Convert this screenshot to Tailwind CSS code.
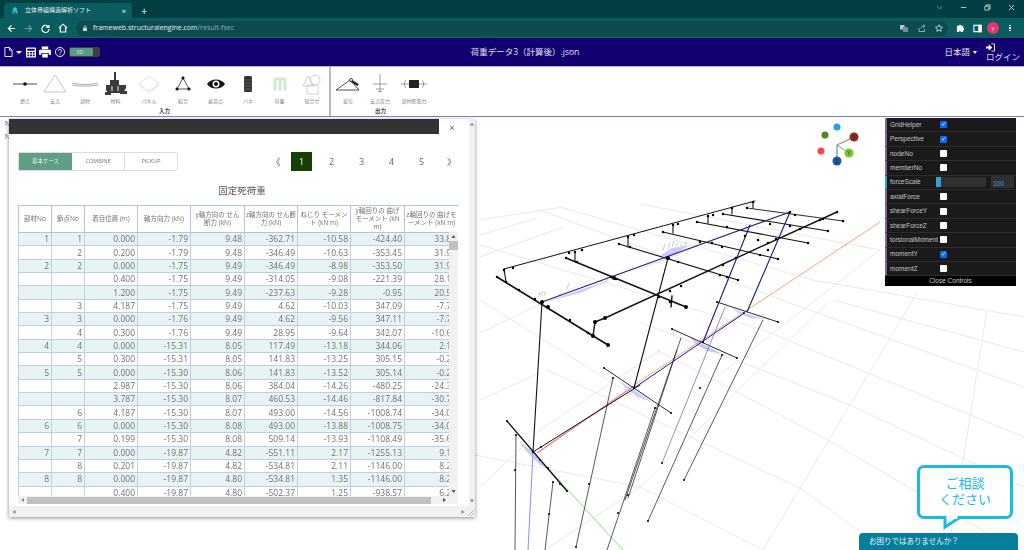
<!DOCTYPE html>
<html lang="en">
<head>
    <meta charset="UTF-8">
    <meta name="viewport" content="width=device-width, initial-scale=1.0">
    <script src="https://cdn.jsdelivr.net/npm/@tailwindcss/browser@4"></script>
    <title>立体骨組構造解析ソフト</title>
</head>
<body class="w-[1024px] h-[550px] overflow-hidden relative bg-white flex flex-col blur-[0.3px] font-['Open_Sans','Noto_Sans_CJK_JP',sans-serif]">

<!-- browser tabs -->
<div class="h-[18px] bg-[#033f42] flex items-end pl-[4px] text-white shrink-0">
    <div class="w-[128px] h-[15px] bg-[#0b5c5e] rounded-t-[4px] flex items-center pl-[7px] pr-[6px] gap-[6px]">
        <svg class="w-[8px] h-[8px]" viewBox="0 0 8 8" fill="#2fc4d8"><path d="M4 0 6 1.500V3.500L4 5 2 3.500V1.500zM1.300 3.500 3.300 5V7L1.300 5.500zM6.700 3.500 4.700 5V7L6.700 5.500z"/></svg>
        <span class="flex-1 text-[6px] text-[#e6f2f2]">立体骨組構造解析ソフト</span>
        <span class="text-[8px] leading-none">×</span>
    </div>
    <span class="ml-[9px] mb-[2px] text-[11px] leading-none">+</span>
    <div class="ml-auto mr-[9px] mb-[7px] flex items-center gap-[17px] text-[#c8d8d8]">
        <svg class="w-[7px] h-[7px]" viewBox="0 0 8 8" fill="none" stroke="#7fa0a0"><path d="M1 2.500 4 5.500 7 2.500"/></svg>
        <svg class="w-[7px] h-[7px]" viewBox="0 0 8 8" fill="none" stroke="currentColor"><path d="M1 4h6"/></svg>
        <svg class="w-[7px] h-[7px]" viewBox="0 0 8 8" fill="none" stroke="currentColor"><path d="M1 2.500h4.500v4.500H1zM2.500 2.500V1H7v4.500H5.500"/></svg>
        <svg class="w-[7px] h-[7px]" viewBox="0 0 8 8" fill="none" stroke="currentColor"><path d="M1 1l6 6M7 1 1 7"/></svg>
    </div>
</div>

<!-- browser toolbar -->
<div class="h-[20px] bg-[#0b5c5e] flex items-center shrink-0 text-white">
    <svg class="ml-[7px] w-[9px] h-[9px]" viewBox="0 0 10 10" fill="none" stroke="currentColor" stroke-width="1.300"><path d="M9 5H1.500M5 1.500 1.500 5 5 8.500"/></svg>
    <svg class="ml-[8px] w-[9px] h-[9px]" viewBox="0 0 10 10" fill="none" stroke="#6f9c9c" stroke-width="1.300"><path d="M1 5h7.500M5 1.500 8.500 5 5 8.500"/></svg>
    <svg class="ml-[8px] w-[9px] h-[9px]" viewBox="0 0 10 10" fill="none" stroke="currentColor" stroke-width="1.300"><path d="M8.500 3.500A4 4 0 1 0 9 5.500M8.800 1v2.800H6"/></svg>
    <svg class="ml-[8px] w-[10px] h-[10px]" viewBox="0 0 10 10" fill="none" stroke="currentColor" stroke-width="1.100"><path d="M1 5 5 1.200 9 5M2.300 4.200V9h5.400V4.200"/></svg>
    <div class="ml-[8px] w-[872px] h-[15px] rounded-full bg-[#0e4b50] flex items-center pl-[6px] pr-[5px] text-[7px]">
        <svg class="w-[6px] h-[6px] mr-[5px]" viewBox="0 0 6 6" fill="#c8d8d8"><path d="M1 2.700h4V6H1zM1.700 2.700V1.800a1.300 1.300 0 0 1 2.600 0v.9h-.6v-.9a.7.700 0 0 0-1.400 0v.9z"/></svg>
        <span class="text-[#e8f0f0]">frameweb.structuralengine.com</span><span class="text-[#8fb0b0]">/result-fsec</span>
        <div class="ml-auto flex items-center gap-[9.500px]">
            <svg class="w-[8px] h-[8px]" viewBox="0 0 8 8"><path d="M0 1h4.500v4.500H0z" fill="#b8c8c8"/><path d="M3 3h5v5H3z" fill="#6f9090"/></svg>
            <svg class="w-[8px] h-[8px]" viewBox="0 0 8 8" fill="none" stroke="#8fb0b0"><path d="M1 4v3.500h5.500V5M3 4.500C3 3 4.200 2 6 2M5 .5 7 2 5 3.500"/></svg>
            <svg class="w-[8px] h-[8px]" viewBox="0 0 10 10" fill="none" stroke="#d8e4e4"><path d="M5 .8 6.300 3.700 9.400 4 7 6.100 7.700 9.200 5 7.600 2.300 9.200 3 6.100.6 4 3.700 3.700z"/></svg>
        </div>
    </div>
    <svg class="ml-[8px] w-[9px] h-[9px]" viewBox="0 0 10 10" fill="#fff"><path d="M1 2h2.200a1.200 1.200 0 0 1 2.400 0H8v2.300a1.200 1.200 0 0 1 0 2.400V9H5.600a1.200 1.200 0 0 0-2.400 0H1z"/></svg>
    <svg class="ml-[8px] w-[9px] h-[9px]" viewBox="0 0 10 10" fill="none" stroke="#fff" stroke-width="1.200"><path d="M1 1.500h8v7H1z"/><path d="M6.500 1.500h2.500v7H6.500z" fill="#fff"/></svg>
    <span class="ml-[5px] w-[12px] h-[12px] rounded-full bg-[#e8326e] text-[6px] flex items-center justify-center">y</span>
    <span class="ml-[10px] flex flex-col gap-[1px]"><i class="w-[1.500px] h-[1.500px] bg-white"></i><i class="w-[1.500px] h-[1.500px] bg-white"></i><i class="w-[1.500px] h-[1.500px] bg-white"></i></span>
</div>

<!-- app header -->
<header class="h-[28px] bg-[#120070] flex items-center relative text-[#e4e0f0] shrink-0">
    <div class="flex items-center pl-[4px]">
        <svg class="w-[9px] h-[12px]" viewBox="0 0 10 12" fill="none" stroke="#fff" stroke-width="1"><path d="M1 1h5l3 3v7H1zM6 1v3h3"/></svg>
        <span class="ml-[3px] w-0 h-0 border-x-[3px] border-x-transparent border-t-[3px] border-t-white"></span>
        <svg class="ml-[4px] w-[10px] h-[11px]" viewBox="0 0 11 11" fill="#fff"><path fill-rule="evenodd" d="M1 0h9a1 1 0 0 1 1 1v9a1 1 0 0 1-1 1H1a1 1 0 0 1-1-1V1a1 1 0 0 1 1-1zM1.500 1.500v2h8v-2zM1.500 5v1.500h2V5zM4.500 5v1.500h2V5zM7.500 5v1.500h2V5zM1.500 7.800v1.700h2V7.800zM4.500 7.800v1.700h2V7.800zM7.500 7.800v1.700h2V7.800z"/></svg>
        <svg class="ml-[3px] w-[12px] h-[12px]" viewBox="0 0 13 12" fill="#fff"><path d="M3 0h7v3H3zM1 3.500h11a1 1 0 0 1 1 1V9h-2.500V7h-8v2H0V4.500a1 1 0 0 1 1-1zM3.500 8h6v4h-6z"/></svg>
        <svg class="ml-[4px] w-[10px] h-[10px]" viewBox="0 0 11 11" fill="none" stroke="#fff"><circle cx="5.500" cy="5.500" r="5"/><path d="M3.800 4.200a1.700 1.700 0 1 1 2.500 1.500c-.5.300-.8.600-.8 1.200M5.500 8v.9"/></svg>
        <div class="ml-[4px] w-[31px] h-[10px] rounded-[2px] bg-[#3d3d3d] flex items-center overflow-hidden p-[1px]">
            <span class="w-[23px] h-[8px] bg-[#5a9a80] rounded-[1px] text-[5.500px] leading-[8px] text-[#d8e8e0] pl-[6px]">3D</span>
        </div>
    </div>
    <div class="absolute left-[26px] right-0 text-center text-[8.500px] pointer-events-none">荷重データ3（計算後）.json</div>
    <div class="ml-auto flex items-center pr-[4px]">
        <span class="text-[8.500px]">日本語</span>
        <span class="ml-[3px] w-0 h-0 border-x-[2px] border-x-transparent border-t-[3px] border-t-white"></span>
        <div class="ml-[9px] flex flex-col items-start leading-none">
            <svg class="w-[9px] h-[9px]" viewBox="0 0 10 10" fill="#fff"><path d="M0 3.800h3V1.500L7 5 3 8.500V6.200H0z"/><path d="M6 .5h3a1 1 0 0 1 1 1v7a1 1 0 0 1-1 1H6v-1h3v-7H6z"/></svg>
            <span class="text-[8.500px] mt-[1px] text-[#dcd8ec]">ログイン</span>
        </div>
    </div>
</header>

<!-- ribbon -->
<nav class="h-[51px] bg-white border-t border-b border-t-[#b8b0d8] border-b-[#8878c0] flex shrink-0 text-[#888]">
    <div class="w-[331px] flex flex-col border-r-2 border-r-[#bbb]">
        <div class="flex-1 flex pl-[10px] pt-[5px]">
            <div class="w-[30px] flex flex-col items-center"><svg class="w-[24px] h-[24px]" viewBox="0 0 24 24"><path d="M0 12h24" stroke="#222" stroke-width=".8"/><circle cx="12" cy="12" r="1.800" fill="#111"/></svg><span class="text-[5px] mt-[2px]">節点</span></div>
            <div class="w-[30px] flex flex-col items-center"><svg class="w-[24px] h-[24px]" viewBox="0 0 24 24" fill="none" stroke="#bbb" stroke-width=".8"><path d="M12 3 23 20H1z"/></svg><span class="text-[5px] mt-[2px]">支点</span></div>
            <div class="w-[30px] flex flex-col items-center"><svg class="w-[26px] h-[24px]" viewBox="0 0 26 24" fill="none" stroke="#999" stroke-width=".8"><path d="M0 11c8 2 18 2 26 0M0 13c8 1.500 18 1.500 26 0"/></svg><span class="text-[5px] mt-[2px]">部材</span></div>
            <div class="w-[31px] flex flex-col items-center"><svg class="w-[22px] h-[24px]" viewBox="0 0 22 24" fill="#3a3a3a"><path d="M9 0h2v8H9zM5 8h9v5H5zM1 13h20v3l-3 5H3l-2-3zM0 20h6v3H0zM15 19h7v3h-7z"/><path d="M6 14h2v5H6zM12 14h2v5h-2z" fill="#999"/></svg><span class="text-[5px] mt-[2px]">材料</span></div>
            <div class="w-[36px] flex flex-col items-center"><svg class="w-[22px] h-[24px]" viewBox="0 0 22 24" fill="none" stroke="#d4d4d4" stroke-width=".8"><path d="M11 4 21 12 11 19 1 12z"/><path d="M1 13.500 11 21 21 13.500" stroke="#e0e0e0"/></svg><span class="text-[5px] mt-[2px]">パネル</span></div>
            <div class="w-[32px] flex flex-col items-center"><svg class="w-[20px] h-[24px]" viewBox="0 0 20 24" fill="none" stroke="#111" stroke-width=".7"><path d="M10 6 16 17H4z"/><g fill="#111"><circle cx="10" cy="6" r="1.200"/><circle cx="16" cy="17" r="1.200"/><circle cx="4" cy="17" r="1.200"/></g></svg><span class="text-[5px] mt-[2px]">結合</span></div>
            <div class="w-[33px] flex flex-col items-center"><svg class="w-[18px] h-[24px]" viewBox="0 0 18 24"><path d="M0 12C4 6 14 6 18 12 14 18 4 18 0 12z" fill="#111"/><circle cx="9" cy="12" r="3.500" fill="#fff"/><circle cx="9" cy="12" r="2" fill="#111"/></svg><span class="text-[5px] mt-[2px]">着目点</span></div>
            <div class="w-[32px] flex flex-col items-center"><svg class="w-[12px] h-[24px]" viewBox="0 0 12 24"><rect x="2" y="4" width="8" height="16" rx="1.500" fill="#333"/><path d="M2 8h8M2 11h8M2 14h8M2 17h8" stroke="#777" stroke-width=".6"/></svg><span class="text-[5px] mt-[2px]">バネ</span></div>
            <div class="w-[31px] flex flex-col items-center"><svg class="w-[14px] h-[24px]" viewBox="0 0 14 24" fill="#dcefdc" stroke="#b8dcb8" stroke-width=".6"><path d="M1 6h12v12h-2V8H8v10H6V8H3v10H1z"/></svg><span class="text-[5px] mt-[2px]">荷重</span></div>
            <div class="w-[34px] flex flex-col items-center"><svg class="w-[20px] h-[24px]" viewBox="0 0 20 24" fill="none" stroke="#c4c4c4" stroke-width=".8"><path d="M6 4 12 14H1z"/><circle cx="13" cy="8" r="5"/><path d="M5 13h11v9H5z"/></svg><span class="text-[5px] mt-[2px]">組合せ</span></div>
        </div>
        <div class="text-center text-[5.500px] leading-[8px] font-semibold text-[#444] pb-[1px]">入力</div>
    </div>
    <div class="flex flex-col">
        <div class="flex-1 flex pl-[3px] pt-[5px]">
            <div class="w-[28px] flex flex-col items-center"><svg class="w-[26px] h-[24px]" viewBox="0 0 26 24" fill="none" stroke="#222" stroke-width=".8"><path d="M1 18 15 8 24 18z"/><path d="M15 8 23 13" stroke-width="2.500"/><circle cx="16" cy="8" r="1.500" fill="#fff"/></svg><span class="text-[5px] mt-[2px]">変位</span></div>
            <div class="w-[36px] flex flex-col items-center"><svg class="w-[16px] h-[24px]" viewBox="0 0 16 24" fill="none" stroke="#777" stroke-width=".7"><path d="M8 2v18M1 12h14M4 17h8M6 19.500h4"/></svg><span class="text-[5px] mt-[2px]">支点反力</span></div>
            <div class="w-[32px] flex flex-col items-center"><svg class="w-[26px] h-[24px]" viewBox="0 0 26 24" fill="none" stroke="#777" stroke-width=".7"><path d="M0 12h26M5 8c-2 2-2 6 0 8M21 8c2 2 2 6 0 8"/><rect x="8" y="8" width="10" height="8" fill="#222" stroke="none"/></svg><span class="text-[5px] mt-[2px]">部材断面力</span></div>
        </div>
        <div class="text-center text-[5.500px] leading-[8px] font-semibold text-[#444] pb-[1px]">出力</div>
    </div>
</nav>

<!-- 3D view -->
<main class="flex-1 relative overflow-hidden">
    <svg class="absolute left-0 top-0 w-[1024px] h-[433px]" viewBox="0 117 1024 433" fill="none">
        <!-- grid, running down to the right -->
        <g stroke="#e8e8e8" stroke-width="1">
            <path d="M813 280 1024 317M833 300 1024 352M790 303 1024 387M763 330 1024 437M640 322 850 405 1024 487M657 350 828 440 1016 550M547 370 800 488 885 550M475 455 640 487 763 550"/>
            <path d="M560 207 813 280M640 204 880 250M540 210 790 303M480 245 763 330M480 300 640 400"/>
        </g>
        <!-- grid, running up to the right -->
        <g stroke="#e8e8e8" stroke-width="1">
            <path d="M987 310 962 467 948 550M917 293 763 550M827 303 640 487 545 550M880 250 700 390M660 350 540 430 480 487"/>
            <path d="M480 220 563 207M480 235 537 218M480 257 563 227M480 333 590 280M480 400 540 373"/>
        </g>
        <!-- axes -->
        <path d="M634 385 880 222" stroke="#f4a878" stroke-width="1"/>
        <path d="M537 453 634 386" stroke="#e87878" stroke-width="1.200"/>
        <path d="M533 452 623 550" stroke="#7be87b" stroke-width="1"/>
        <path d="M533 452 528 550" stroke="#8a8aff" stroke-width="1"/>
        <!-- moment diagrams -->
        <g fill="#a8a8f4" fill-opacity=".6" stroke="none">
            <path d="M519 441 533 452 551 471 540 465 526 451z"/>
            <path d="M618 380 634 390 652 402 638 397 627 389z"/>
            <path d="M688 336 703 344 722 354 707 351 696 344z"/>
            <path d="M730 307 744 313 764 319 750 318 739 313z"/>
            <path d="M661 255 672 248 690 245 668 258z"/>
            <path d="M545 302 580 290 612 279 580 293z"/>
            <path d="M612 278 668 258 710 241 665 260z"/>
        </g>
        <g stroke="#aaa" stroke-width=".6">
            <path d="M663 250 665 244M668 249 670 243M672 247 674 241M676 246 678 243M680 246 682 244M685 245 686 241"/>
            <path d="M538 298 540 292M541 296 543 291M544 296 546 291M567 289 569 283M611 280 613 274M606 282 608 276"/>
            <path d="M746 208 748 204M749 207 751 203"/>
        </g>
        <!-- members -->
        <g stroke="#111" stroke-width="1.100" stroke-linecap="round">
            <path d="M504 269 755 201" stroke-width="1"/>
            <path d="M497 277 608 345" stroke-width="1.600"/>
            <path d="M566 258 686 307" stroke-width="1.400"/>
            <path d="M619 244 738 280"/>
            <path d="M663 232 778 259"/>
            <path d="M697 222 808 243"/>
            <path d="M723 214 828 231"/>
            <path d="M747 208 843 221" stroke-width=".9"/>
            <path d="M605 318 837 212M595 322 605 318M595 322 593 336M672 296 671 307" stroke-width="1.400"/>
            <path d="M504 269 506 282M575 252 575 262M628 237 628 247M673 225 673 233M708 216 708 223M732 208 732 214M753 202 753 208"/>
            <path d="M717 302 778 322M672 329 737 358M604 368 671 413" stroke-width=".9"/>
            <path d="M507 421 567 491" stroke-width="1.300"/>
            <path d="M542 302 533 452M668 258 634 388"/>
            <path d="M533 452 640 385" stroke-width="1"/>
            <path d="M516 435 515 550M553 482 545 550M613 378 576 547M655 408 607 550M681 338 625 500M677 350 628 498M722 355 648 521M763 320 684 480" stroke-width=".7"/>
        </g>
        <g stroke-linecap="round" stroke-width="1">
            <path d="M542 302 790 212" stroke="#20207a" stroke-width="1.100"/>
            <path d="M750 225 703 342M790 212 747 312" stroke="#16167e" stroke-width="1.100"/>
            <path d="M634 388 743 314" stroke="#1a1a90"/>
            <path d="M725 307 662 463" stroke="#6060a8" stroke-width=".7"/>
        </g>
        <!-- nodes: a zero length line with round caps is a dot -->
        <g stroke="#000" stroke-linecap="round" stroke-width="2.500">
            <path d="M504 270h0M513 268h0M569 253h0M575 252h0M582 250h0M628 237h0M634 235h0M673 225h0M678 224h0M708 216h0M713 215h0M732 208h0M753 202h0M790 212h0"/>
            <path d="M497 277h0M506 282h0M519 290h0M535 299h0M570 320h0M588 333h0"/>
            <path d="M566 258h0M577 262h0M611 277h0M616 279h0M659 297h0M670 302h0"/>
            <path d="M619 244h0M630 247h0M667 258h0M678 262h0M720 275h0M727 277h0M738 280h0"/>
            <path d="M663 232h0M700 242h0M712 243h0M722 247h0M760 255h0M778 259h0M727 227h0M745 236h0M768 250h0"/>
            <path d="M697 222h0M758 240h0M808 243h0M723 214h0M770 224h0M790 226h0M828 231h0M747 208h0M795 215h0M823 219h0M843 221h0"/>
            <path d="M670 291h0M681 286h0M723 265h0M736 258h0M768 243h0M776 239h0M800 229h0M820 220h0M837 212h0"/>
        </g>
        <g stroke="#000" stroke-linecap="round" stroke-width="4">
            <path d="M542 302h0M548 307h0M614 278h0M668 258h0M593 336h0M595 322h0M605 318h0M608 345h0M686 307h0"/>
        </g>
        <g stroke="#000" stroke-linecap="round" stroke-width="2">
            <path d="M717 302h0M778 322h0M672 329h0M737 358h0M703 342h0M744 313h0M722 355h0M604 368h0M671 413h0M634 388h0M655 408h0M613 378h0M507 421h0M533 452h0M540 460h0M548 468h0M516 435h0M553 482h0M560 484h0M567 491h0M541 447h0M515 470h0M549 514h0M589 484h0M618 513h0M576 547h0M628 495h0M700 388h0M684 480h0M648 521h0M662 463h0"/>
        </g>
    </svg>

    <!-- stray text under the dialog -->
    <div class="absolute left-[5px] top-0 text-[7px] leading-[13px] text-[#555]">N<br>N</div>

    <!-- axis gizmo -->
    <svg class="absolute left-[815px] top-[3px] w-[50px] h-[50px]" viewBox="815 120 50 50">
        <path d="M837 145 854 137" stroke="#b06060" stroke-width="1"/>
        <path d="M837 145 849 153" stroke="#6fb030" stroke-width="1"/>
        <path d="M837 145V161" stroke="#3080c0" stroke-width="1"/>
        <circle cx="837" cy="127" r="3.500" fill="#2a9df4"/>
        <circle cx="825" cy="135" r="3.500" fill="#4f8a1f"/>
        <circle cx="821" cy="151" r="3.500" fill="#ff4848"/>
        <circle cx="854" cy="137" r="4.500" fill="#8c2a2a"/>
        <circle cx="849" cy="153" r="4.500" fill="#7ac52a"/>
        <circle cx="837" cy="161" r="4.500" fill="#1a5a9a"/>
        <g font-size="5" text-anchor="middle" fill="#222" font-family="Liberation Sans">
            <text x="854" y="139">X</text><text x="849" y="155">Y</text><text x="837" y="163">Z</text>
        </g>
    </svg>

    <!-- dat.gui panel -->
    <aside id="gui" class="absolute left-[885px] top-[1px] w-[131px] bg-[#1a1a1a] text-[#c4c4c4] text-[6.500px] font-['Liberation_Sans',sans-serif]"></aside>

    <!-- result dialog -->
    <section class="absolute left-[9px] top-[2px] w-[466px] h-[398px] bg-white shadow-[0_1px_4px_rgba(0,0,0,0.45)] flex flex-col text-[#666]">
        <div class="h-[15px] flex shrink-0">
            <div class="w-[430px] bg-[#333]"></div>
            <span class="w-[26px] text-center text-[9px] leading-[17px] text-[#555]">×</span>
        </div>
        <div class="flex items-center pl-[9px] pt-[18px]">
            <div class="flex h-[19px] w-[160px] border border-[#ddd] rounded-[2px] text-[5.500px] leading-[17px] text-center text-[#777]">
                <span class="w-[53px] bg-[#5f9e85] text-[#e8f4ee]">基本ケース</span>
                <span class="w-[53px] border-r border-[#ddd]">COMBINE</span>
                <span class="flex-1">PICKUP</span>
            </div>
            <div class="ml-[83px] flex items-center text-[9px] text-center">
                <span class="w-[30px] text-[#666]">《</span>
                <span class="w-[21px] h-[19px] bg-[#143f05] text-white leading-[19px]">1</span>
                <span class="w-[39px]">2</span>
                <span class="w-[21px]">3</span>
                <span class="w-[39px]">4</span>
                <span class="w-[21px]">5</span>
                <span class="w-[39px] text-[#666]">》</span>
            </div>
        </div>
        <h3 class="text-[9.500px] text-center text-[#555] mt-[13px] leading-[14px]">固定死荷重</h3>
        <div class="relative ml-[9px] mt-[7px] w-[440px] h-[299px] overflow-hidden">
            <table class="w-[440px] table-fixed border-collapse text-[8.500px] text-[#707070]">
                <colgroup><col class="w-[33px]"><col class="w-[33px]"><col class="w-[53px]"><col class="w-[53px]"><col class="w-[54px]"><col class="w-[53px]"><col class="w-[53px]"><col class="w-[54px]"><col class="w-[54px]"></colgroup>
                <thead>
                    <tr class="h-[27px] text-[6.500px] leading-[8px]">
                        <th class="font-normal border border-[#a8c8e4] px-0">部材No</th>
                        <th class="font-normal border border-[#a8c8e4] px-0">節点No</th>
                        <th class="font-normal border border-[#a8c8e4] px-0">着目位置 (m)</th>
                        <th class="font-normal border border-[#a8c8e4] px-0">軸方向力 (kN)</th>
                        <th class="font-normal border border-[#a8c8e4] px-0">y軸方向の せん<br>断力 (kN)</th>
                        <th class="font-normal border border-[#a8c8e4] px-0">z軸方向の せん断<br>力 (kN)</th>
                        <th class="font-normal border border-[#a8c8e4] px-0">ねじり モーメン<br>ト (kN m)</th>
                        <th class="font-normal border border-[#a8c8e4] px-0">y軸回りの 曲げ<br>モーメント (kN<br>m)</th>
                        <th class="font-normal border border-[#a8c8e4] px-0">z軸回りの 曲げモ<br>ーメント (kN m)</th>
                    </tr>
                </thead>
                <tbody id="rows"></tbody>
            </table>
            <!-- inner scrollbars -->
            <div class="absolute right-0 top-[27px] bottom-0 w-[9px] bg-[#f1f1f1]">
                <svg class="w-[9px] h-[9px]" viewBox="0 0 9 9" fill="#555"><path d="M4.500 3 6.500 6h-4z"/></svg>
                <div class="h-[9px] bg-[#c1c1c1]"></div>
                <svg class="absolute left-0 bottom-[8px] w-[9px] h-[9px]" viewBox="0 0 9 9" fill="#555"><path d="M4.500 6 6.500 3h-4z"/></svg>
            </div>
            <div class="absolute left-0 right-0 bottom-0 h-[8px] bg-[#f1f1f1] flex items-center pl-[9px] pr-[27px]">
                <svg class="absolute left-0 w-[9px] h-[8px]" viewBox="0 0 9 8" fill="#888"><path d="M3 4 6 2v4z"/></svg>
                <div class="w-full h-[7px] bg-[#c1c1c1]"></div>
                <svg class="absolute right-[9px] w-[9px] h-[8px]" viewBox="0 0 9 8" fill="#555"><path d="M6 4 3 2v4z"/></svg>
            </div>
        </div>
        <!-- outer scrollbars -->
        <div class="absolute right-0 top-0 bottom-[11px] w-[6px] bg-[#f1f1f1]">
            <svg class="w-[6px] h-[6px] mt-[2px]" viewBox="0 0 6 6" fill="#888"><path d="M3 1.500 5 4.500H1z"/></svg>
            <svg class="absolute left-0 bottom-[2px] w-[6px] h-[6px]" viewBox="0 0 6 6" fill="#888"><path d="M3 4.500 5 1.500H1z"/></svg>
        </div>
        <div class="absolute left-0 right-0 bottom-0 h-[11px] bg-[#f1f1f1] flex items-center">
            <svg class="ml-[2px] w-[6px] h-[6px]" viewBox="0 0 6 6" fill="#888"><path d="M1.500 3 4.500 1V5z"/></svg>
            <svg class="ml-[443px] w-[6px] h-[6px]" viewBox="0 0 6 6" fill="#888"><path d="M4.500 3 1.500 1V5z"/></svg>
            <svg class="absolute right-0 bottom-0 w-[8px] h-[8px]" viewBox="0 0 8 8" stroke="#999" stroke-width=".7"><path d="M7 1 1 7M7 4 4 7"/></svg>
        </div>
    </section>

    <!-- chat widget -->
    <div class="absolute left-[917px] top-[348px] w-[96px] h-[54px] bg-white border-[3px] border-[#19b9e8] rounded-[7px] text-[#19b9e8] text-[13px] text-center pt-[7px]">
        <p class="leading-[16px]">ご相談</p>
        <p class="leading-[16px]">ください</p>
    </div>
    <svg class="absolute left-[938px] top-[398px] w-[24px] h-[16px]" viewBox="0 0 24 16" fill="#fff" stroke="#19b9e8" stroke-width="3"><path d="M7 2V12L21 3"/><path d="M8.500 0h11v4H8.500z" stroke="none"/></svg>
    <div class="absolute left-[859px] bottom-0 w-[159px] h-[17px] bg-[#067f9c] rounded-t-[4px] pl-[10px] text-[7.500px] leading-[16px] text-[#e8f4f8]">お困りではありませんか？</div>
</main>

<script>
    const rows = [
        ["1","1","0.000","-1.79","9.48","-362.71","-10.58","-424.40","33.85"],
        ["","2","0.200","-1.79","9.48","-346.49","-10.63","-353.45","31.95"],
        ["2","2","0.000","-1.75","9.49","-346.49","-8.98","-353.50","31.95"],
        ["","","0.400","-1.75","9.49","-314.05","-9.08","-221.39","28.14"],
        ["","","1.200","-1.75","9.49","-237.63","-9.28","-0.95","20.55"],
        ["","3","4.187","-1.75","9.49","4.62","-10.03","347.09","-7.72"],
        ["3","3","0.000","-1.76","9.49","4.62","-9.56","347.11","-7.72"],
        ["","4","0.300","-1.76","9.49","28.95","-9.64","342.07","-10.61"],
        ["4","4","0.000","-15.31","8.05","117.49","-13.18","344.06","2.15"],
        ["","5","0.300","-15.31","8.05","141.83","-13.25","305.15","-0.25"],
        ["5","5","0.000","-15.30","8.06","141.83","-13.52","305.14","-0.25"],
        ["","","2.987","-15.30","8.06","384.04","-14.26","-480.25","-24.35"],
        ["","","3.787","-15.30","8.07","460.53","-14.46","-817.84","-30.75"],
        ["","6","4.187","-15.30","8.07","493.00","-14.56","-1008.74","-34.05"],
        ["6","6","0.000","-15.30","8.08","493.00","-13.88","-1008.75","-34.05"],
        ["","7","0.199","-15.30","8.08","509.14","-13.93","-1108.49","-35.65"],
        ["7","7","0.000","-19.87","4.82","-551.11","2.17","-1255.13","9.15"],
        ["","8","0.201","-19.87","4.82","-534.81","2.11","-1146.00","8.25"],
        ["8","8","0.000","-19.87","4.80","-534.81","1.35","-1146.00","8.25"],
        ["","","0.400","-19.87","4.80","-502.37","1.25","-938.57","6.25"],
    ];
    document.getElementById("rows").innerHTML = rows.map((r, i) =>
        `<tr class="h-[13.35px] ${i % 2 == 0 ? "bg-[#e8f4f4]" : "bg-white"}">` +
        r.map(c => `<td class="border border-[#b8d0e8] text-right pr-[2px] leading-[12px] p-0">${c}</td>`).join("") +
        `</tr>`).join("");

    const controls = [
        ["GridHelper", true], ["Perspective", true], ["nodeNo", false], ["memberNo", false],
        ["forceScale", null], ["axialForce", false], ["shearForceY", false], ["shearForceZ", false],
        ["torsionalMoment", false], ["momentY", true], ["momentZ", false],
    ];
    document.getElementById("gui").innerHTML = controls.map(([name, on]) => {
        if (on === null) {
            return `<div class="h-[14.4px] flex items-center border-l-2 border-l-[#2fa1d6] border-b border-b-[#2c2c2c] pl-[3px]">
                <span class="w-[46px]">${name}</span>
                <span class="w-[50px] h-[10px] bg-[#303030]"><i class="block w-[5px] h-full bg-[#2fa1d6]"></i></span>
                <span class="ml-[5px] w-[23px] h-[12px] bg-[#303030] text-[#2fa1d6] pl-[2px] leading-[15px]">100</span>
            </div>`;
        }
        const box = on
            ? `<span class="w-[7px] h-[7px] rounded-[1px] bg-[#0a6cf5] text-white text-[6px] leading-[7px] text-center">✓</span>`
            : `<span class="w-[7px] h-[7px] rounded-[1px] bg-white"></span>`;
        return `<div class="h-[14.4px] flex items-center border-l-2 border-l-[#806787] border-b border-b-[#2c2c2c] pl-[3px]">
            <span class="w-[49.500px] whitespace-nowrap">${name}</span>${box}
        </div>`;
    }).join("") + `<div class="h-[10px] bg-black text-center leading-[10px]">Close Controls</div>`;
</script>
</body>
</html>
